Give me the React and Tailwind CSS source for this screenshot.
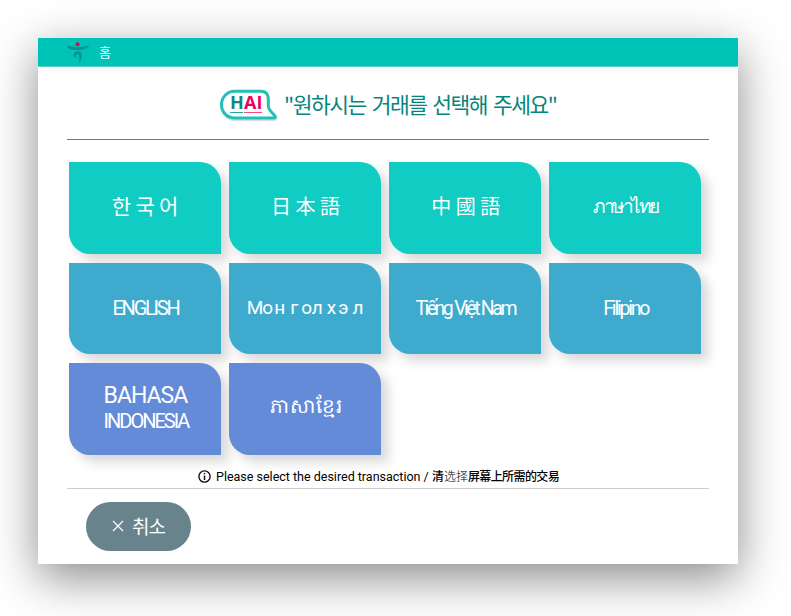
const cjk = "font-['Noto_Sans_CJK_KR',sans-serif]";
const latin = "font-['Roboto',sans-serif] font-normal whitespace-nowrap";

function Tile({ color, children }) {
  return (
    <button
      className={`flex h-[91.5px] w-[152px] items-center justify-center rounded-tr-[21px] rounded-bl-[21px] text-white shadow-[7px_7px_12px_rgba(0,0,0,0.16)] ${color}`}
    >
      {children}
    </button>
  );
}

const teal = "bg-[#10ccc2]";
const blue = "bg-[#3eabce]";
const indigo = "bg-[#648bd7]";

function BrandMark() {
  return (
    <svg width="24" height="22" viewBox="0 0 24 22" className="mt-[1px] block shrink-0">
      <circle cx="10.6" cy="2.3" r="2" fill="#e4004f" />
      <path d="M.2 3.8C4 5.4 16 5.6 22.6 3.2C20 6.8 15 8 10 8C4 8 .4 7 .2 3.8Z" fill="#0a8f93" />
      <path d="M7 14.5C6.4 10.9 8.4 9.2 10.8 9.2C15.8 9.2 16 15.5 12 21.4C12.6 16.7 12.8 12 10.5 12C9 12 9 13.2 9.4 14.8Q8 15.7 7 14.5Z" fill="#0a8f93" />
    </svg>
  );
}

function HaiBubble() {
  return (
    <div className="mt-[4px] grid h-[34px] w-[60px] shrink-0">
      <svg width="60" height="34" viewBox="0 0 60 34" className="col-start-1 row-start-1">
        <path d="M15.5 3.5H42Q49 3.5 49.3 11V18Q49.5 21 51.5 23L56.5 28.6Q57.5 31 55 31H15.5A13 13.6 0 0 1 15.5 3.5Z" transform="translate(.5 1)" fill="none" stroke="#dde2e2" strokeWidth="2.5" />
        <path d="M15.5 3.3H42Q49 3.3 49.3 11V18Q49.5 21 51.5 23L56 28Q57 30 54.5 30H15.5A13 13.3 0 0 1 15.5 3.3Z" fill="#fff" stroke="#20c1b8" strokeWidth="3" strokeLinejoin="round" />
      </svg>
      <div className="z-10 col-start-1 row-start-1 flex gap-[1px] pt-[6px] pl-[11px] font-['Open_Sans',sans-serif] text-[18px] leading-[17px] font-bold">
        <span className="h-[19px] w-[13px] border-b border-[#20aaa2] text-[#12857f]">H</span>
        <span className="h-[19px] w-[18px] border-b border-[#f04c85] text-[#ee0060]">AI</span>
      </div>
    </div>
  );
}

export default function App() {
  return (
    <div className="h-[616px] w-[791px] overflow-hidden bg-white pt-[38px] pl-[38px]">
      <main className={`flex h-[526px] w-[700px] flex-col bg-white shadow-[0_14px_44px_rgba(0,0,0,0.46)] ${cjk}`}>
        <header className="flex h-[29px] shrink-0 items-center border-b border-[#55d3cb] bg-[#00c3b8] pl-[29px] text-white">
          <BrandMark />
          <span className="ml-[8px] pb-[1px] text-[13px] leading-none">홈</span>
        </header>

        <section className="mx-[29px] flex h-[73px] shrink-0 items-center border-b border-[#777] pl-[152px]">
          <HaiBubble />
          <h1 className="mt-[2px] ml-[5px] text-[21.5px] leading-none tracking-[-1.5px] whitespace-nowrap text-[#07857d] [word-spacing:2.5px]">
            "원하시는 거래를 선택해 주세요"
          </h1>
        </section>

        <section className="mt-[22px] ml-[31px] grid w-[633px] shrink-0 grid-cols-[repeat(4,152px)] gap-x-[8.1px] gap-y-[9px]">
          <Tile color={teal}><span className="pb-[4px] text-[21px] tracking-[-0.2px]">한 국 어</span></Tile>
          <Tile color={teal}><span className="pb-[3px] pl-[1px] text-[20px]">日 本 語</span></Tile>
          <Tile color={teal}><span className="pb-[3px] pl-[1px] text-[20px]">中 國 語</span></Tile>
          <Tile color={teal}><span className="pb-[5px] text-[19px] tracking-[-2.5px]">ภาษาไทย</span></Tile>
          <Tile color={blue}><span className={`${latin} pl-[1px] text-[20px] tracking-[-2.2px]`}>ENGLISH</span></Tile>
          <Tile color={blue}>
            <span className={`${latin} text-[19px]`}>
              <span className="tracking-[-1px]">Мо</span>
              <span className="ml-[2px]">н</span>
              <span className="ml-[5px]">г</span>
              <span className="ml-[3px]">ол</span>
              <span className="ml-[4px]">х</span>
              <span className="ml-[2px]">э</span>
              <span className="ml-[4px]">л</span>
            </span>
          </Tile>
          <Tile color={blue}><span className={`${latin} text-[19.5px] tracking-[-2.5px] [word-spacing:0.5px]`}>Tiếng Việt Nam</span></Tile>
          <Tile color={blue}><span className={`${latin} pl-[1px] text-[19.5px] tracking-[-2.2px]`}>Filipino</span></Tile>
          <Tile color={indigo}>
            <span className={`${latin} flex flex-col items-start pl-[2px]`}>
              <span className="text-[23px] leading-[26px] tracking-[-1px]">BAHASA</span>
              <span className="text-[20px] leading-[25px] tracking-[-2px]">INDONESIA</span>
            </span>
          </Tile>
          <Tile color={indigo}><span className="pb-[8px] pl-[2px] text-[20px] tracking-[1px]">ភាសាខ្មែរ</span></Tile>
        </section>

        <section className="mx-[29px] flex h-[34px] shrink-0 items-center border-b-[1.5px] border-[#ccc] pt-[11px] pl-[131px] text-black">
          <svg width="13" height="13" viewBox="0 0 13 13" className="shrink-0">
            <circle cx="6.5" cy="6.5" r="5.6" fill="none" stroke="#111" strokeWidth="1.4" />
            <path d="M6.5 5.5V10M6.5 3V4.3" stroke="#111" strokeWidth="1.5" />
          </svg>
          <p className="mt-[1px] ml-[5px] font-['Roboto','Noto_Sans_CJK_SC',sans-serif] text-[12px] leading-none whitespace-nowrap">
            <span className="text-[12.5px] tracking-[0px]">Please select the desired transaction / </span>
            <span className="font-medium">清</span>
            <span className="font-light">选择</span>
            <span className="font-medium tracking-[-0.6px]">屏幕上所需的交易</span>
          </p>
        </section>

        <footer className="pt-[13px] pl-[48px]">
          <button className="flex h-[49px] w-[105px] items-center rounded-full bg-[#69838c] pl-[26px] text-white">
            <svg width="12" height="12" viewBox="0 0 12 12"><path d="M1 1L11 11M11 1L1 11" stroke="#fff" strokeWidth="1.2" /></svg>
            <span className="ml-[8px] pb-[2px] text-[19px] leading-none tracking-[-1px]">취소</span>
          </button>
        </footer>
      </main>
    </div>
  );
}
